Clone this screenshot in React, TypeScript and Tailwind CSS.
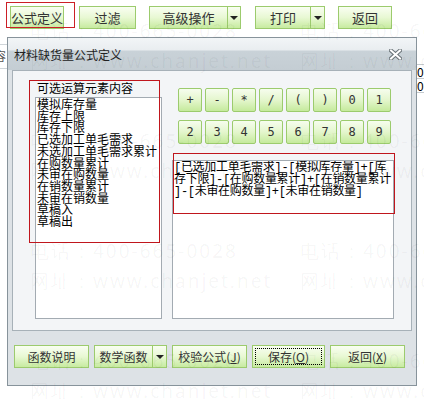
import React from 'react';

const btnBase =
  'h-[23px] border border-[#9ccb6d] bg-[linear-gradient(to_bottom,#f9fef2,#e8f8d3_50%,#c7eba0)] text-[#333]';

const Arrow = () => (
  <span className="w-0 h-0 border-l-[4px] border-r-[4px] border-t-[4px] border-l-transparent border-r-transparent border-t-[#222]" />
);

const GreenBtn = ({ className = '', children }: { className?: string; children: React.ReactNode }) => (
  <div className={`${btnBase} relative flex items-center justify-center ${className}`}>{children}</div>
);

const SplitBtn = ({ className = '', arrowW, children }: { className?: string; arrowW: string; children: React.ReactNode }) => (
  <div className={`${btnBase} flex ${className}`}>
    <div className="flex-1 flex items-center justify-center">{children}</div>
    <div className={`${arrowW} border-l border-[#9ccb6d] flex items-center justify-center`}>
      <Arrow />
    </div>
  </div>
);

const elements = [
  '模拟库存量',
  '库存上限',
  '库存下限',
  '已选加工单毛需求',
  '未选加工单毛需求累计',
  '在购数量累计',
  '未审在购数量',
  '在销数量累计',
  '未审在销数量',
  '草稿入',
  '草稿出',
];

const ops = ['+', '-', '*', '/', '(', ')', '0', '1', '2', '3', '4', '5', '6', '7', '8', '9'];

const CloseIcon = () => (
  <svg width="13" height="11" viewBox="0 0 13 11">
    <path d="M2 1.5 L11 9.5 M11 1.5 L2 9.5" stroke="#6b7479" strokeWidth="4" strokeLinecap="square" />
    <path d="M2 1.5 L11 9.5 M11 1.5 L2 9.5" stroke="#ffffff" strokeWidth="2" strokeLinecap="square" />
  </svg>
);

const marks = [30, 140, 250, 360];

export default function App() {
  return (
    <div className="relative w-[424px] h-[399px] overflow-hidden bg-white font-['Noto_Sans_CJK_SC',sans-serif]">
      {/* toolbar */}
      <div className="flex items-start pt-[6px] pl-[10px] text-[13px]">
        <GreenBtn className="w-[54px]">公式定义</GreenBtn>
        <GreenBtn className="w-[57px] ml-[15px]">过滤</GreenBtn>
        <SplitBtn className="w-[92px] ml-[13px]" arrowW="w-[13px]">高级操作</SplitBtn>
        <SplitBtn className="w-[70px] ml-[14px]" arrowW="w-[14px]">打印</SplitBtn>
        <GreenBtn className="w-[54px] ml-[13px]">返回</GreenBtn>
      </div>

      {/* page fragments behind the dialog */}
      <div className="absolute left-0 top-[44px] w-[7px] h-[25px] overflow-hidden border-t border-b border-[#cfd5d9] text-[12px] leading-[22px] text-[#555]">
        <span className="relative left-[-6px]">容</span>
      </div>
      <div className="absolute left-[416px] top-[64px] w-[8px] text-[12px] leading-[13px] text-black">
        <div className="border-t border-[#c4cace] pl-[1px]">0</div>
        <div className="border-t border-b border-[#c4cace] pl-[1px]">0</div>
      </div>

      {/* dialog */}
      <div className="absolute left-[7px] top-[37px] w-[410px] h-[349px] border border-[#87939b] bg-[#dde2e6] flex flex-col">
        <div className="h-[32px] flex items-center justify-between pl-[6px] pr-[14px] bg-[linear-gradient(to_bottom,#f2f5f7_0px,#e9edf0_12px,#c9d2d8_13px,#c4cdd3_32px)]">
          <span className="text-[12px] text-[#222] mt-[1px]">材料缺货量公式定义</span>
          <CloseIcon />
        </div>

        <div className="mx-[4px] h-[261px] border border-[#a7b1b8] bg-[#f3f5f7] flex">
          <div className="ml-[22px] w-[127px] pt-[11px]">
            <div className="pl-[2px] h-[15px] text-[12px] leading-[12px] text-black">可选运算元素内容</div>
            <div className="h-[222px] border border-[#a3abb2] bg-white pl-[1px] text-[12px] leading-[11.7px] text-black whitespace-nowrap overflow-hidden">
              {elements.map((e) => (
                <div key={e}>{e}</div>
              ))}
            </div>
          </div>

          <div className="ml-[10px] w-[222px] pt-[17px]">
            <div className="pl-[6px] grid grid-cols-[repeat(8,24px)] gap-x-[3px] gap-y-[8px]">
              {ops.map((o) => (
                <div
                  key={o}
                  className="h-[24px] rounded-[2px] border border-[#9ccb6d] bg-[linear-gradient(to_bottom,#f6fdee,#e4f6cd_50%,#c5ea9c)] flex items-center justify-center text-[12px] text-[#333] font-['DejaVu_Sans_Mono',monospace]"
                >
                  {o}
                </div>
              ))}
            </div>
            <div className="mt-[16px] h-[159px] border border-[#a3abb2] bg-white pl-[1px] pt-[1px] text-[12px] leading-[12px] tracking-[-0.3px] text-black whitespace-nowrap overflow-hidden font-['Liberation_Mono','Noto_Sans_CJK_SC',monospace]">
              <div>[已选加工单毛需求]-[模拟库存量]+[库</div>
              <div>存下限]-[在购数量累计]+[在销数量累计</div>
              <div>]-[未审在购数量]+[未审在销数量]</div>
            </div>
          </div>
        </div>

        <div className="flex pl-[6px] mt-[14px] text-[12px]">
          <GreenBtn className="w-[75px]">函数说明</GreenBtn>
          <SplitBtn className="w-[73px] ml-[5px]" arrowW="w-[14px]">数学函数</SplitBtn>
          <GreenBtn className="w-[75px] ml-[5px]">
            校验公式(<span className="underline">J</span>)
          </GreenBtn>
          <GreenBtn className="w-[73px] ml-[5px]">
            <span className="absolute inset-[2px] border border-dotted border-black" />
            保存(<span className="underline">O</span>)
          </GreenBtn>
          <GreenBtn className="w-[75px] ml-[5px]">
            返回(<span className="underline">X</span>)
          </GreenBtn>
        </div>
      </div>

      {/* red annotation boxes */}
      <div className="absolute left-[6px] top-[2px] w-[69px] h-[26px] border-[1.5px] border-[#cc1f26]" />
      <div className="absolute left-[29px] top-[80px] w-[131px] h-[163px] border border-[#c0161d]" />
      <div className="absolute left-[173px] top-[153px] w-[222px] h-[61px] border border-[#c0161d]" />

      {/* watermark */}
      <div className="absolute inset-0 pointer-events-none text-[19px] tracking-[2px] text-black/[0.045] font-['Noto_Sans',sans-serif]">
        {marks.map((y) => (
          <React.Fragment key={y}>
            <div className="absolute left-[30px] whitespace-nowrap" style={{ top: y - 13 }}>电话：400-665-0028</div>
            <div className="absolute left-[300px] whitespace-nowrap" style={{ top: y - 13 }}>电话：400-665-0028</div>
            <div className="absolute left-[30px] whitespace-nowrap" style={{ top: y + 17 }}>网址：www.chanjet.net</div>
            <div className="absolute left-[300px] whitespace-nowrap" style={{ top: y + 17 }}>网址：www.chanjet.net</div>
          </React.Fragment>
        ))}
      </div>
    </div>
  );
}
